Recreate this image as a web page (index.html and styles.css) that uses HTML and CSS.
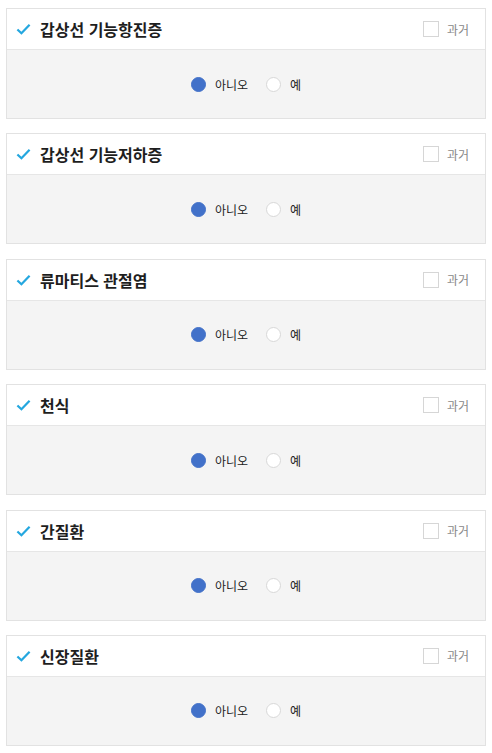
FILE: index.html
```html
<!DOCTYPE html>
<html lang="ko">
<head>
    <meta charset="UTF-8">
    <meta name="viewport" content="width=device-width, initial-scale=1.0">
    <title>질환 체크</title>
    <link rel="stylesheet" href="styles.css">
</head>
<body>

    <div class="disease-list">
        <div class="disease-card">
            <div class="card-head">
                <svg class="check" viewBox="0 0 16 12"><path d="M1.5 6.5 L5.8 10.5 L14.5 1.5" /></svg>
                <span class="title">갑상선 기능항진증</span>
                <label class="past"><span class="box"></span>과거</label>
            </div>
            <div class="card-body">
                <label class="radio"><span class="dot on"></span>아니오</label>
                <label class="radio"><span class="dot"></span>예</label>
            </div>
        </div>

        <div class="disease-card">
            <div class="card-head">
                <svg class="check" viewBox="0 0 16 12"><path d="M1.5 6.5 L5.8 10.5 L14.5 1.5" /></svg>
                <span class="title">갑상선 기능저하증</span>
                <label class="past"><span class="box"></span>과거</label>
            </div>
            <div class="card-body">
                <label class="radio"><span class="dot on"></span>아니오</label>
                <label class="radio"><span class="dot"></span>예</label>
            </div>
        </div>

        <div class="disease-card">
            <div class="card-head">
                <svg class="check" viewBox="0 0 16 12"><path d="M1.5 6.5 L5.8 10.5 L14.5 1.5" /></svg>
                <span class="title">류마티스 관절염</span>
                <label class="past"><span class="box"></span>과거</label>
            </div>
            <div class="card-body">
                <label class="radio"><span class="dot on"></span>아니오</label>
                <label class="radio"><span class="dot"></span>예</label>
            </div>
        </div>

        <div class="disease-card">
            <div class="card-head">
                <svg class="check" viewBox="0 0 16 12"><path d="M1.5 6.5 L5.8 10.5 L14.5 1.5" /></svg>
                <span class="title">천식</span>
                <label class="past"><span class="box"></span>과거</label>
            </div>
            <div class="card-body">
                <label class="radio"><span class="dot on"></span>아니오</label>
                <label class="radio"><span class="dot"></span>예</label>
            </div>
        </div>

        <div class="disease-card">
            <div class="card-head">
                <svg class="check" viewBox="0 0 16 12"><path d="M1.5 6.5 L5.8 10.5 L14.5 1.5" /></svg>
                <span class="title">간질환</span>
                <label class="past"><span class="box"></span>과거</label>
            </div>
            <div class="card-body">
                <label class="radio"><span class="dot on"></span>아니오</label>
                <label class="radio"><span class="dot"></span>예</label>
            </div>
        </div>

        <div class="disease-card">
            <div class="card-head">
                <svg class="check" viewBox="0 0 16 12"><path d="M1.5 6.5 L5.8 10.5 L14.5 1.5" /></svg>
                <span class="title">신장질환</span>
                <label class="past"><span class="box"></span>과거</label>
            </div>
            <div class="card-body">
                <label class="radio"><span class="dot on"></span>아니오</label>
                <label class="radio"><span class="dot"></span>예</label>
            </div>
        </div>
    </div>

</body>
</html>
```

FILE: styles.css
```css
body {
    margin: 0;
    padding: 8px 6px;
    background: #fff;
    font-family: "Noto Sans CJK KR", "Noto Sans", sans-serif;
    color: #222;
}
.disease-card {
    border: 1px solid #e2e2e2;
    margin-bottom: 14.4px;
}
.card-head {
    display: flex;
    align-items: center;
    height: 40px;
    padding: 0 16px 0 9px;
    border-bottom: 1px solid #e6e6e6;
    background: #fff;
}
.check {
    width: 15px;
    height: 12px;
    margin-right: 9px;
    fill: none;
    stroke: #24a7df;
    stroke-width: 2.4;
}
.title {
    font-size: 16px;
    font-weight: bold;
    color: #1e1e1e;
}
.past {
    margin-left: auto;
    display: flex;
    align-items: center;
    font-size: 12px;
    color: #888;
}
.past .box {
    width: 14px;
    height: 14px;
    border: 1px solid #d6d6d6;
    background: #fff;
    margin-right: 8px;
}
.card-body {
    height: 68px;
    display: flex;
    justify-content: center;
    align-items: center;
    gap: 18px;
    background: #f4f4f4;
}
.radio {
    display: flex;
    align-items: center;
    font-size: 12px;
    color: #222;
}
.dot {
    width: 13px;
    height: 13px;
    border-radius: 50%;
    border: 1px solid #d8d8d8;
    background: #fff;
    margin-right: 9px;
}
.dot.on {
    border-color: #4271c9;
    background: #4271c9;
}
```
